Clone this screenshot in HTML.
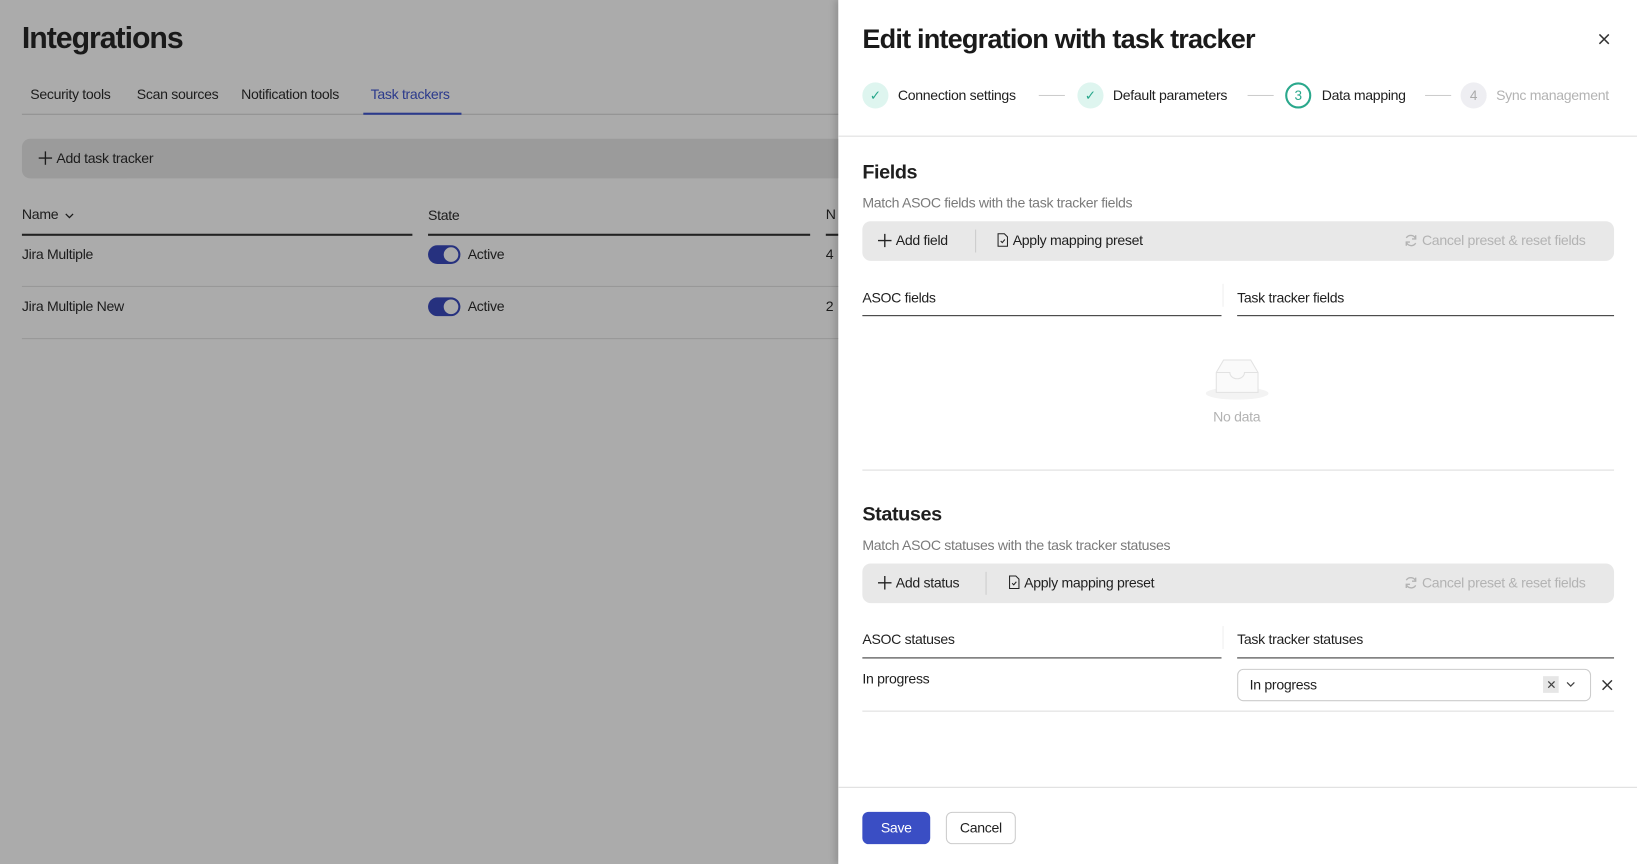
<!DOCTYPE html>
<html><head><meta charset="utf-8"><style>
*{box-sizing:border-box;margin:0;padding:0}
html,body{width:1637px;height:864px;overflow:hidden;background:#fff}
body{font-family:"Liberation Sans",sans-serif;color:#1f1f1f}
#w{position:absolute;left:0;top:0;width:1568px;height:828px;transform:scale(1.04401,1.04348);transform-origin:0 0}
.a{position:absolute;white-space:nowrap}
#left{position:absolute;left:0;top:0;width:803px;height:828px;background:#ababab;color:#1c1c1c}
#panel{position:absolute;left:803px;top:0;width:765px;height:828px;background:#fff;box-shadow:-3px 0 6px rgba(0,0,0,.15)}
.t13{font-size:13.5px;letter-spacing:-.3px}
.tb{position:absolute;left:23px;width:720px;height:38px;background:#e8e8e8;border-radius:8px}
.gray{color:#b3b3b3}
.line{position:absolute;height:2px;background:#2b2b2b}
.circ{position:absolute;width:25px;height:25px;border-radius:50%;text-align:center;line-height:25px;font-size:13px}
.pl{display:inline-block;vertical-align:-2px;margin-right:4px}
</style></head><body><div id="w">
<div id="left">
 <div class="a" style="left:21px;top:21px;font-size:29px;font-weight:bold;letter-spacing:-1px;color:#1a1a1a">Integrations</div>
 <div class="a t13" style="left:29px;top:83px">Security tools</div>
 <div class="a t13" style="left:131px;top:83px">Scan sources</div>
 <div class="a t13" style="left:231px;top:83px">Notification tools</div>
 <div class="a t13" style="left:355px;top:83px;color:#2b3a8c">Task trackers</div>
 <div class="a" style="left:21px;top:109px;width:782px;height:1px;background:#8f8f8f"></div>
 <div class="a" style="left:348px;top:108px;width:94px;height:2px;background:#2b3a8c"></div>
 <div class="a" style="left:21px;top:133px;width:782px;height:38px;background:#9b9b9b;border-radius:8px 0 0 8px"></div>
 <div class="a t13" style="left:37px;top:144px"><svg class="pl" width="13" height="13"><path d="M6.5 0v13M0 6.5h13" stroke="#1c1c1c" stroke-width="1.3"/></svg>Add task tracker</div>
 <div class="a t13" style="left:21px;top:198px">Name <svg width="9" height="6" style="margin-left:3px"><path d="M1 1l3.5 3.5L8 1" stroke="#1c1c1c" fill="none" stroke-width="1.2"/></svg></div>
 <div class="a t13" style="left:410px;top:199px">State</div>
 <div class="a t13" style="left:791px;top:198px">N</div>
 <div class="a" style="left:21px;top:224px;width:374px;height:2px;background:#222"></div>
 <div class="a" style="left:410px;top:224px;width:366px;height:2px;background:#222"></div>
 <div class="a" style="left:791px;top:224px;width:12px;height:2px;background:#222"></div>
 <div class="a t13" style="left:21px;top:236px">Jira Multiple</div>
 <div class="a t13" style="left:21px;top:286px">Jira Multiple New</div>
 <div class="a" style="left:410px;top:235px;width:31px;height:18px;border-radius:9px;background:#26317f"><div style="position:absolute;right:2px;top:2px;width:14px;height:14px;border-radius:50%;background:#ababab"></div></div>
 <div class="a" style="left:410px;top:285px;width:31px;height:18px;border-radius:9px;background:#26317f"><div style="position:absolute;right:2px;top:2px;width:14px;height:14px;border-radius:50%;background:#ababab"></div></div>
 <div class="a t13" style="left:448px;top:236px">Active</div>
 <div class="a t13" style="left:448px;top:286px">Active</div>
 <div class="a t13" style="left:791px;top:236px">4</div>
 <div class="a t13" style="left:791px;top:286px">2</div>
 <div class="a" style="left:21px;top:274px;width:782px;height:1px;background:#979797"></div>
 <div class="a" style="left:21px;top:324px;width:782px;height:1px;background:#979797"></div>
</div>
<div id="panel">
 <div class="a" style="left:23px;top:22px;font-size:26px;font-weight:bold;letter-spacing:-.8px;color:#1a1a1a">Edit integration with task tracker</div>
 <svg class="a" style="left:728px;top:32px" width="11" height="11"><path d="M1 1l9 9M10 1l-9 9" stroke="#333" stroke-width="1.4"/></svg>
 <div class="circ" style="left:23px;top:79px;background:#def5ef;color:#2aa88c">&#10003;</div>
 <div class="a t13" style="left:57px;top:84px">Connection settings</div>
 <div class="a" style="left:192px;top:91px;width:25px;height:1px;background:#ccc"></div>
 <div class="circ" style="left:229px;top:79px;background:#def5ef;color:#2aa88c">&#10003;</div>
 <div class="a t13" style="left:263px;top:84px">Default parameters</div>
 <div class="a" style="left:392px;top:91px;width:25px;height:1px;background:#ccc"></div>
 <div class="circ" style="left:428px;top:79px;border:2px solid #2aa88c;color:#2aa88c;line-height:21px">3</div>
 <div class="a t13" style="left:463px;top:84px">Data mapping</div>
 <div class="a" style="left:562px;top:91px;width:25px;height:1px;background:#ccc"></div>
 <div class="circ" style="left:596px;top:79px;background:#eeeef2;color:#aaa">4</div>
 <div class="a t13 gray" style="left:630px;top:84px">Sync management</div>
 <div class="a" style="left:0;top:130px;width:765px;height:1px;background:#ddd"></div>

 <div class="a" style="left:23px;top:155px;font-size:19px;font-weight:bold;letter-spacing:-.4px">Fields</div>
 <div class="a t13" style="left:23px;top:187px;color:#7a7a7a">Match ASOC fields with the task tracker fields</div>
 <div class="tb" style="top:212px"></div>
 <div class="a t13" style="left:38px;top:223px"><svg class="pl" width="13" height="13"><path d="M6.5 0v13M0 6.5h13" stroke="#222" stroke-width="1.3"/></svg>Add field</div>
 <div class="a" style="left:131px;top:220px;width:1px;height:22px;background:#ccc"></div>
 <div class="a t13" style="left:152px;top:223px"><svg class="pl" width="11" height="14"><path d="M1 1h6l3 3v9H1z" fill="none" stroke="#222"/><path d="M3.5 8l1.5 1.5L7.5 6.5" fill="none" stroke="#222"/></svg>Apply mapping preset</div>
 <div class="a t13 gray" style="left:542px;top:223px"><svg class="pl" width="13" height="13"><path d="M11 5A5 5 0 0 0 2 4M2 8a5 5 0 0 0 9 1" fill="none" stroke="#b3b3b3" stroke-width="1.3"/><path d="M11 1.5V5H7.5M2 11.5V8h3.5" fill="none" stroke="#b3b3b3" stroke-width="1.3"/></svg>Cancel preset &amp; reset fields</div>
 <div class="a t13" style="left:23px;top:278px">ASOC fields</div>
 <div class="a t13" style="left:382px;top:278px">Task tracker fields</div>
 <div class="a" style="left:368px;top:272px;width:1px;height:22px;background:#eee"></div>
 <div class="line" style="left:23px;top:302px;width:344px;height:1px;background:#333"></div>
 <div class="line" style="left:382px;top:302px;width:361px;height:1px;background:#333"></div>
 <svg class="a" style="left:351px;top:340px" width="62" height="44" viewBox="0 0 62 44"><ellipse cx="31" cy="37" rx="30" ry="6" fill="#f3f3f3"/><path d="M11 17 L18 5 H44 L51 17 V36 H11 Z" fill="#fafafa" stroke="#e2e2e2"/><path d="M11 17 H24 a7 6 0 0 0 14 0 H51" fill="none" stroke="#e2e2e2"/></svg>
 <div class="a t13 gray" style="left:359px;top:392px">No data</div>
 <div class="a" style="left:23px;top:450px;width:720px;height:1px;background:#ddd"></div>

 <div class="a" style="left:23px;top:483px;font-size:19px;font-weight:bold;letter-spacing:-.4px">Statuses</div>
 <div class="a t13" style="left:23px;top:515px;color:#7a7a7a">Match ASOC statuses with the task tracker statuses</div>
 <div class="tb" style="top:540px"></div>
 <div class="a t13" style="left:38px;top:551px"><svg class="pl" width="13" height="13"><path d="M6.5 0v13M0 6.5h13" stroke="#222" stroke-width="1.3"/></svg>Add status</div>
 <div class="a" style="left:141px;top:548px;width:1px;height:22px;background:#ccc"></div>
 <div class="a t13" style="left:163px;top:551px"><svg class="pl" width="11" height="14"><path d="M1 1h6l3 3v9H1z" fill="none" stroke="#222"/><path d="M3.5 8l1.5 1.5L7.5 6.5" fill="none" stroke="#222"/></svg>Apply mapping preset</div>
 <div class="a t13 gray" style="left:542px;top:551px"><svg class="pl" width="13" height="13"><path d="M11 5A5 5 0 0 0 2 4M2 8a5 5 0 0 0 9 1" fill="none" stroke="#b3b3b3" stroke-width="1.3"/><path d="M11 1.5V5H7.5M2 11.5V8h3.5" fill="none" stroke="#b3b3b3" stroke-width="1.3"/></svg>Cancel preset &amp; reset fields</div>
 <div class="a t13" style="left:23px;top:605px">ASOC statuses</div>
 <div class="a t13" style="left:382px;top:605px">Task tracker statuses</div>
 <div class="a" style="left:368px;top:600px;width:1px;height:22px;background:#eee"></div>
 <div class="line" style="left:23px;top:630px;width:344px;height:1px;background:#333"></div>
 <div class="line" style="left:382px;top:630px;width:361px;height:1px;background:#333"></div>
 <div class="a t13" style="left:23px;top:643px">In progress</div>
 <div class="a" style="left:382px;top:641px;width:339px;height:31px;border:1px solid #ccc;border-radius:6px"></div>
 <div class="a t13" style="left:394px;top:649px">In progress</div>
 <div class="a" style="left:675px;top:648px;width:15px;height:16px;background:#e6e6e6"><svg style="position:absolute;left:4px;top:4px" width="8" height="8"><path d="M1 1l6 6M7 1l-6 6" stroke="#444" stroke-width="1.2"/></svg></div>
 <svg class="a" style="left:697px;top:653px" width="9" height="6"><path d="M1 1l3.5 3.5L8 1" stroke="#444" fill="none" stroke-width="1.2"/></svg>
 <svg class="a" style="left:731px;top:651px" width="11" height="11"><path d="M1 1l9 9M10 1l-9 9" stroke="#333" stroke-width="1.4"/></svg>
 <div class="a" style="left:23px;top:681px;width:720px;height:1px;background:#ddd"></div>

 <div class="a" style="left:0;top:754px;width:765px;height:1px;background:#ddd"></div>
 <div class="a t13" style="left:23px;top:778px;width:65px;height:31px;background:#3a4ec4;color:#fff;border-radius:6px;text-align:center;line-height:31px">Save</div>
 <div class="a t13" style="left:103px;top:778px;width:67px;height:31px;border:1px solid #ccc;border-radius:6px;text-align:center;line-height:29px">Cancel</div>
</div>
</div></body></html>
